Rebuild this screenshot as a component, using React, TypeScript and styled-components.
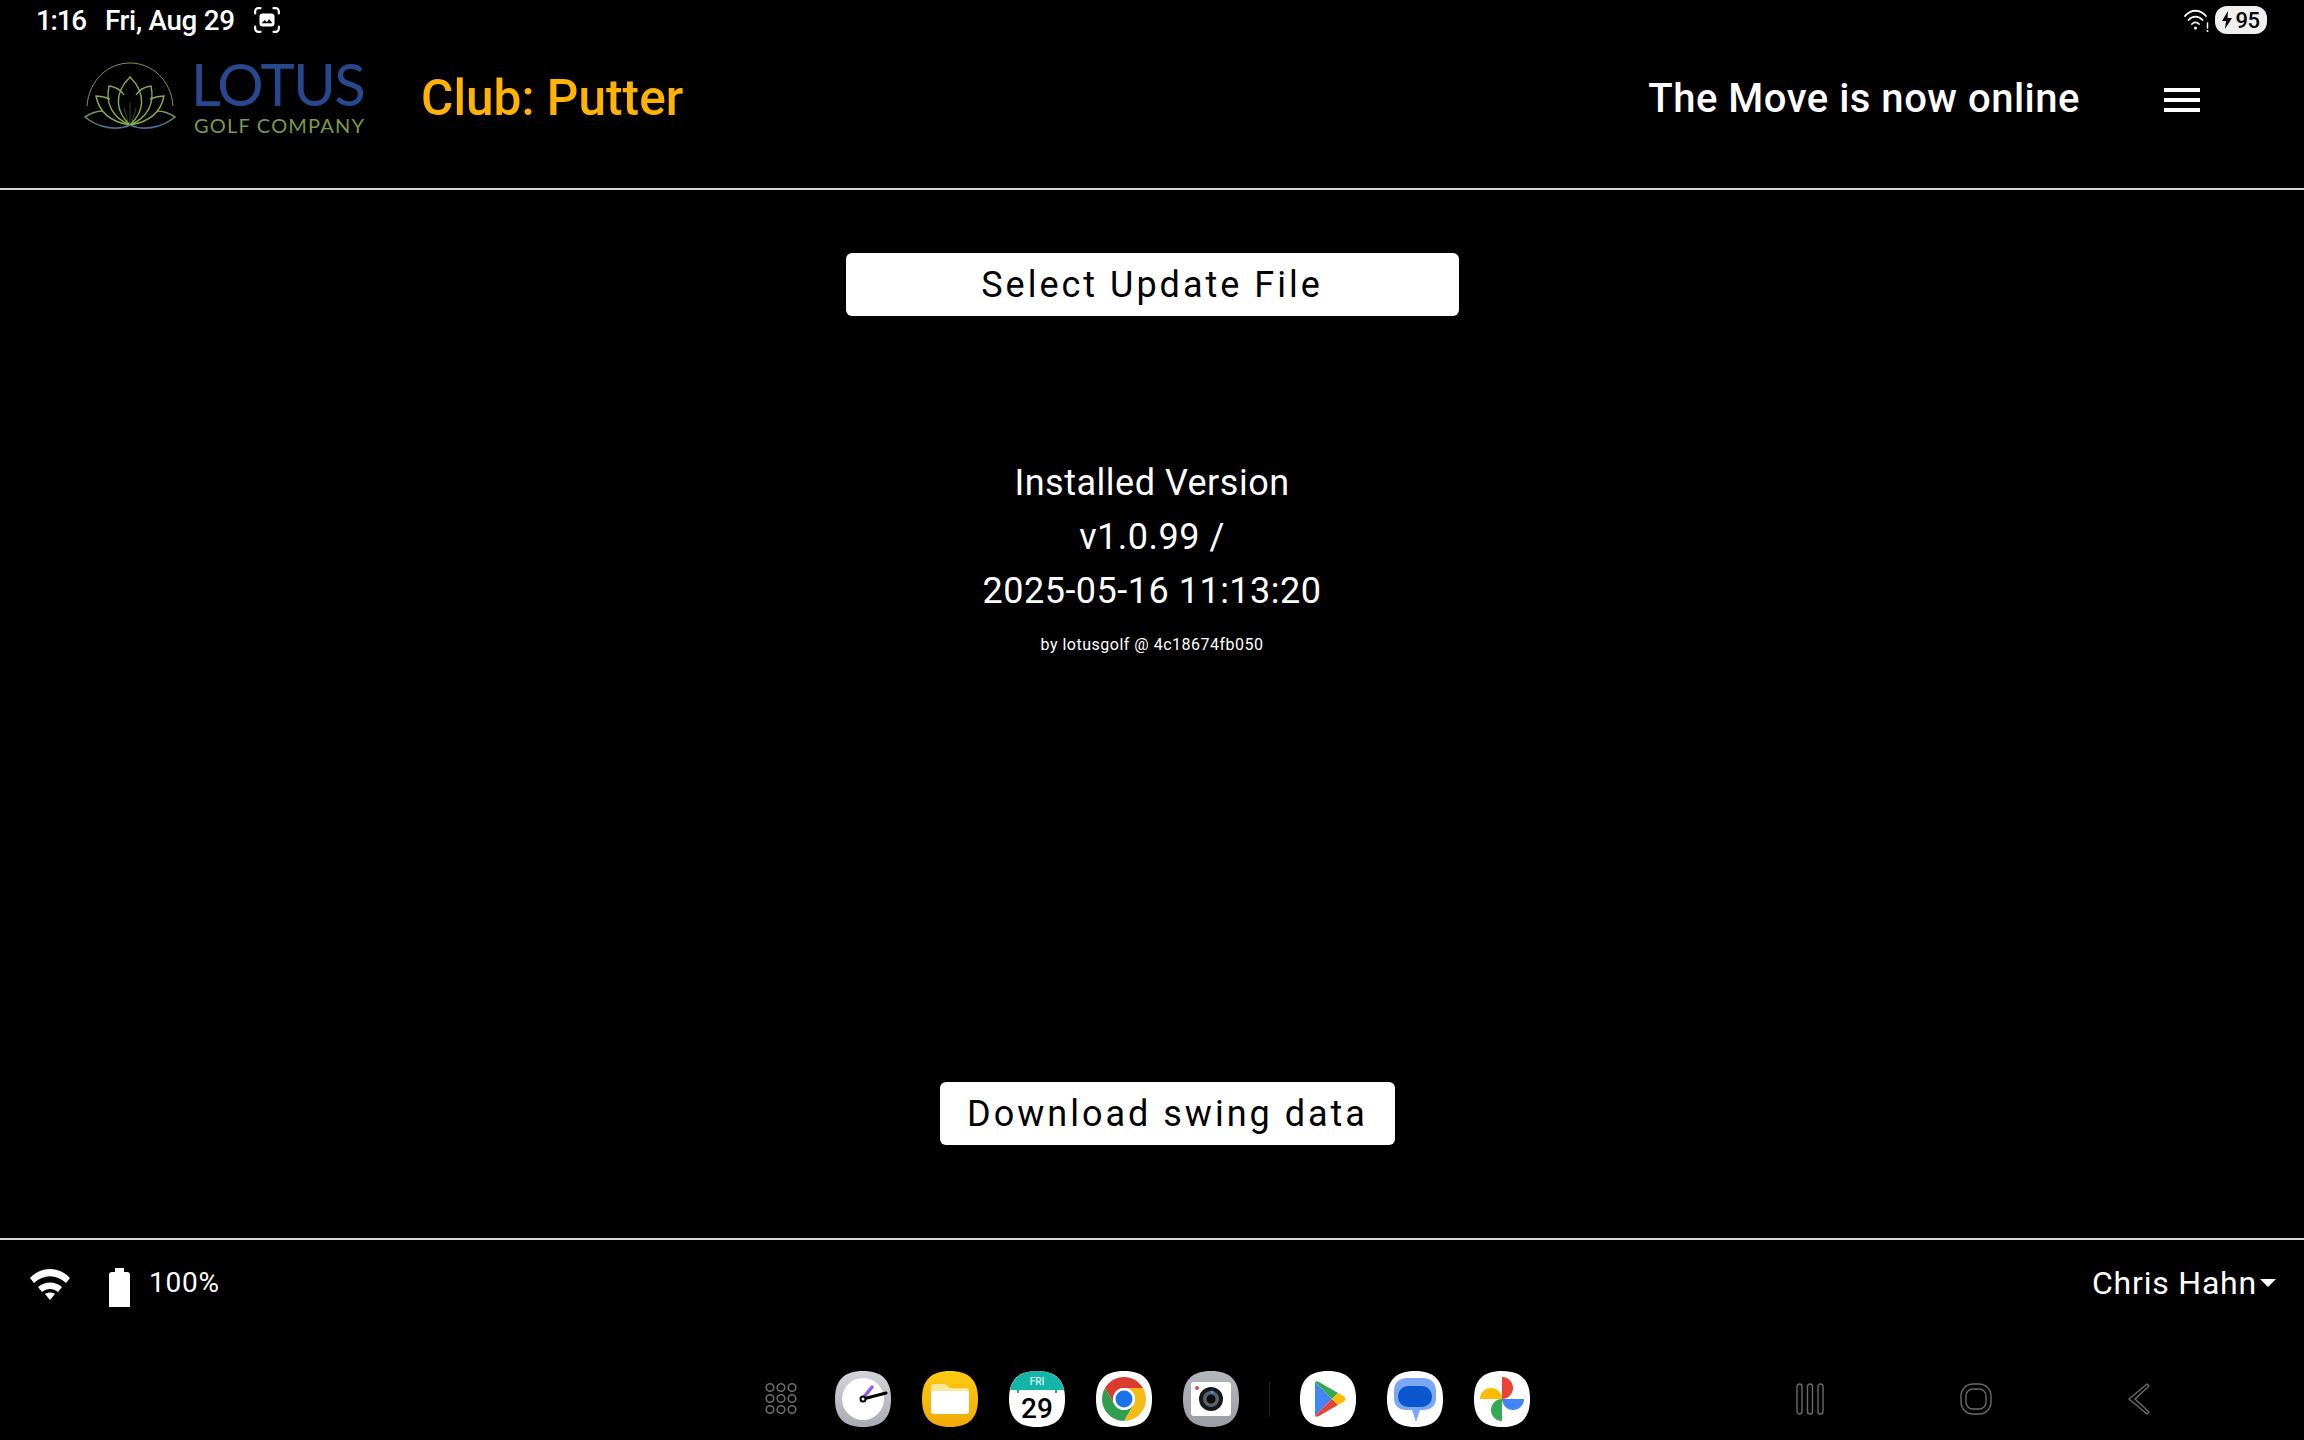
import styled, { createGlobalStyle } from "styled-components";

const GlobalStyle = createGlobalStyle`
  html, body {
    margin: 0;
    padding: 0;
    background: #000;
  }
  body {
    font-family: Roboto, "Liberation Sans", sans-serif;
    color: #fff;
  }
`;

const squircle = "M28 0C47 0 56 9 56 28S47 56 28 56 0 47 0 28 9 0 28 0Z";

function LotusMark() {
  return (
    <svg width="92" height="72" viewBox="0 0 92 72" fill="none">
      <defs>
        <linearGradient id="leaf" x1="0" y1="48" x2="0" y2="66" gradientUnits="userSpaceOnUse">
          <stop offset="0" stopColor="#8aa64c" />
          <stop offset="1" stopColor="#3f6f97" />
        </linearGradient>
      </defs>
      <path d="M3 44C5 18 24 1 46 1s41 17 43 43" stroke="#7d9a45" strokeWidth="1" />
      <g stroke="#8cab4c" strokeWidth="1.4">
        <path d="M46 63C32 50 29 32 46 15c17 17 14 35 0 48Z" />
        <path d="M46 63C29 56 21 42 25 24c7 1 12 4 15 9" />
        <path d="M46 63c17-7 25-21 21-39-7 1-12 4-15 9" />
        <path d="M46 63C27 60 15 50 12 34c5 0 9 1 14 3" />
        <path d="M46 63c19-3 31-13 34-29-5 0-9 1-14 3" />
      </g>
      <g stroke="url(#leaf)" strokeWidth="1.6">
        <path d="M46 63C33 69 14 66 1 55c6-4 12-6 18-6" />
        <path d="M46 63c13 6 32 3 45-8-6-4-12-6-18-6" />
      </g>
      <path d="M46 62V40M44 60l-4-14M48 60l4-14" stroke="#6f8a3c" strokeWidth=".5" />
    </svg>
  );
}

function ScreenshotGlyph() {
  return (
    <svg width="28" height="28" viewBox="0 0 26 26" fill="none">
      <path
        d="M7 2H5a3 3 0 0 0-3 3v2M19 2h2a3 3 0 0 1 3 3v2M7 24H5a3 3 0 0 1-3-3v-2M19 24h2a3 3 0 0 0 3-3v-2"
        stroke="#fff"
        strokeWidth="2"
        strokeLinecap="round"
      />
      <rect x="6" y="7" width="14" height="12" rx="3" fill="#fff" />
      <path d="M8 16l3-3 2 2 2-3 3 4Z" fill="#000" />
    </svg>
  );
}

function StatusWifi() {
  return (
    <svg width="25" height="26" viewBox="0 0 25 26" fill="none" stroke="#fff" strokeLinecap="round">
      <path d="M1 9c6-7 15-7 21 0" strokeWidth="1.8" />
      <path d="M4.5 13c4-4.500 10-4.500 14 0" strokeWidth="1.8" />
      <path d="M8 17c2-2.200 5-2.200 7 0" strokeWidth="1.8" />
      <circle cx="11.500" cy="21" r="1.500" fill="#fff" stroke="none" />
      <path d="M23.500 16v5" strokeWidth="1.500" />
      <circle cx="23.500" cy="24" r="1" fill="#fff" stroke="none" />
    </svg>
  );
}

function FooterWifi() {
  return (
    <svg width="40" height="32" viewBox="0 0 40 32" fill="#fff">
      <path d="M0 10C11-2 29-2 40 10l-4 5C26 6 14 6 4 15Z" />
      <path d="M8 19c7-6 17-6 24 0l-4 5c-5-4-11-4-16 0Z" />
      <path d="M15 26c3-2 7-2 10 0l-5 6Z" />
    </svg>
  );
}

function BatteryIcon() {
  return (
    <svg width="21" height="39" viewBox="0 0 21 39" fill="#fff">
      <path d="M6 0h9v4h3a3 3 0 0 1 3 3v32H0V7a3 3 0 0 1 3-3h3Z" />
    </svg>
  );
}

function AppsGrid() {
  const dots = [5, 16, 27];
  return (
    <svg width="32" height="33" viewBox="0 0 32 33" fill="none" stroke="#6d6d6d" strokeWidth="1.6">
      {dots.map((y) => dots.map((x) => <circle key={`${x}-${y}`} cx={x} cy={y + 0.5} r="3.8" />))}
    </svg>
  );
}

function ClockApp() {
  return (
    <svg width="56" height="56" viewBox="0 0 56 56">
      <defs>
        <linearGradient id="clockBg" x1="0" y1="0" x2="0" y2="1">
          <stop offset="0" stopColor="#d3d5da" />
          <stop offset="1" stopColor="#a9abb2" />
        </linearGradient>
      </defs>
      <path d={squircle} fill="url(#clockBg)" />
      <circle cx="28" cy="28" r="21" fill="#fff" />
      <path d="M29 26l8-10" stroke="#8a5cf0" strokeWidth="3.500" strokeLinecap="round" />
      <path d="M28 28l23-6" stroke="#000" strokeWidth="3" strokeLinecap="round" />
      <circle cx="28" cy="28" r="2.500" fill="#fff" stroke="#000" strokeWidth="2" />
    </svg>
  );
}

function FilesApp() {
  return (
    <svg width="56" height="56" viewBox="0 0 56 56">
      <defs>
        <linearGradient id="filesBg" x1="0" y1="0" x2="0" y2="1">
          <stop offset="0" stopColor="#fdcb12" />
          <stop offset="1" stopColor="#f0a908" />
        </linearGradient>
      </defs>
      <path d={squircle} fill="url(#filesBg)" />
      <path d="M9 16a3 3 0 0 1 3-3h11l5 4h16a3 3 0 0 1 3 3v6H9Z" fill="#ffe79a" />
      <rect x="9" y="20" width="38" height="23" rx="3" fill="#fff" />
    </svg>
  );
}

function CalendarApp() {
  return (
    <svg width="56" height="56" viewBox="0 0 56 56">
      <path d={squircle} fill="#fff" />
      <path d="M28 0C43 0 52 6 55 19H1C4 6 13 0 28 0Z" fill="#12b5a8" />
      <path d="M8 17h2v5H8zM46 17h2v5h-2z" fill="#12b5a8" />
      <text x="28" y="14" textAnchor="middle" fontFamily="Roboto" fontWeight="500" fontSize="10" fill="#d8f5f2">
        FRI
      </text>
      <text x="28" y="47" textAnchor="middle" fontFamily="Roboto" fontWeight="500" fontSize="28" fill="#000">
        29
      </text>
    </svg>
  );
}

function ChromeApp() {
  return (
    <svg width="56" height="56" viewBox="0 0 56 56">
      <path d={squircle} fill="#fff" />
      <path d="M9 17A22 22 0 0 1 47 17H28A11 11 0 0 0 18.500 33.500Z" fill="#db3a2e" />
      <path d="M47 17A22 22 0 0 1 28 50L37.500 33.500A11 11 0 0 0 28 17Z" fill="#f6bb16" />
      <path d="M28 50A22 22 0 0 1 9 17L18.500 33.500A11 11 0 0 0 37.500 33.500Z" fill="#2f9e4f" />
      <circle cx="28" cy="28" r="11" fill="#fff" />
      <circle cx="28" cy="28" r="8.500" fill="#1a73e8" />
    </svg>
  );
}

function CameraApp() {
  return (
    <svg width="56" height="56" viewBox="0 0 56 56">
      <defs>
        <linearGradient id="camBg" x1="0" y1="0" x2="0" y2="1">
          <stop offset="0" stopColor="#b4b7bd" />
          <stop offset="1" stopColor="#9a9da4" />
        </linearGradient>
      </defs>
      <path d={squircle} fill="url(#camBg)" />
      <rect x="8" y="11" width="40" height="34" rx="3" fill="#fff" />
      <circle cx="14" cy="17" r="2" fill="#e0483e" />
      <circle cx="28" cy="28" r="12" fill="#17181c" />
      <circle cx="28" cy="28" r="8" fill="#5c6068" />
      <circle cx="28" cy="28" r="4.500" fill="#0c0d10" />
      <circle cx="29" cy="21" r="1.500" fill="#36a3d9" />
    </svg>
  );
}

function PlayApp() {
  return (
    <svg width="56" height="56" viewBox="0 0 56 56">
      <path d={squircle} fill="#fff" />
      <path d="M15 11v34l17-17Z" fill="#4285f4" />
      <path d="M15 11c1-1 2-1 4 0l19 11-6 6Z" fill="#34a853" />
      <path d="M15 45c1 1 2 1 4 0l19-11-6-6Z" fill="#ea4335" />
      <path d="M38 22l6 3.500c2 1.500 2 3.500 0 5L38 34l-6-6Z" fill="#fbbc04" />
    </svg>
  );
}

function MessagesApp() {
  return (
    <svg width="56" height="56" viewBox="0 0 56 56">
      <path d={squircle} fill="#fff" />
      <path d="M20 7h16c8 0 13 5 13 13v7c0 8-5 12-13 12h-3l-4 12-4-12h-5C12 39 7 35 7 27v-7C7 12 12 7 20 7Z" fill="#7ba7f7" />
      <rect x="11" y="15" width="34" height="21" rx="10" fill="#0b57d0" />
    </svg>
  );
}

function PhotosApp() {
  return (
    <svg width="56" height="56" viewBox="0 0 56 56">
      <path d={squircle} fill="#fff" />
      <path d="M28 28V6a11 11 0 0 1 0 22Z" fill="#ea4335" />
      <path d="M28 28h22a11 11 0 0 1-22 0Z" fill="#4285f4" />
      <path d="M28 28v22a11 11 0 0 1 0-22Z" fill="#34a853" />
      <path d="M28 28H6a11 11 0 0 1 22 0Z" fill="#fbbc04" />
    </svg>
  );
}

function NavRecents() {
  return (
    <svg width="28" height="32" viewBox="0 0 28 32" fill="none" stroke="#6a6a6a" strokeWidth="1.400">
      <rect x="1" y="1" width="5" height="30" rx="2.500" />
      <rect x="11.500" y="1" width="5" height="30" rx="2.500" />
      <rect x="22" y="1" width="5" height="30" rx="2.500" />
    </svg>
  );
}

function NavHome() {
  return (
    <svg width="32" height="32" viewBox="0 0 32 32" fill="none" stroke="#6a6a6a" strokeWidth="1.400">
      <rect x="1" y="1" width="30" height="30" rx="12" />
      <rect x="6" y="6" width="20" height="20" rx="7" />
    </svg>
  );
}

function NavBack() {
  return (
    <svg width="22" height="32" viewBox="0 0 22 32" fill="none" stroke="#6a6a6a" strokeWidth="1.400" strokeLinejoin="round">
      <path d="M19 1l2 2L7 16l14 13-2 2L1 16Z" />
    </svg>
  );
}

export default function App() {
  return (
    <Screen>
      <GlobalStyle />
      <StatusBar>
        <StatusGroup>
          <StatusTime>1:16</StatusTime>
          <StatusText>Fri, Aug 29</StatusText>
          <ScreenshotGlyph />
        </StatusGroup>
        <StatusRight>
          <StatusWifi />
          <BatteryPill>
            <svg width="10" height="18" viewBox="0 0 10 18" fill="#000">
              <path d="M6 0L0 10h4l-1 8 7-11H5.500Z" />
            </svg>
            95
          </BatteryPill>
        </StatusRight>
      </StatusBar>

      <Header>
        <Brand>
          <LotusMark />
          <Wordmark>
            <LotusName>LOTUS</LotusName>
            <LotusSub>GOLF COMPANY</LotusSub>
          </Wordmark>
        </Brand>
        <ClubName>Club: Putter</ClubName>
        <Connection>The Move is now online</Connection>
        <MenuButton aria-label="menu">
          <MenuBar />
          <MenuBar />
          <MenuBar />
        </MenuButton>
      </Header>

      <Main>
        <SelectButton>Select Update File</SelectButton>
        <VersionBlock>
          <VersionLine>Installed Version</VersionLine>
          <VersionLine>v1.0.99 /</VersionLine>
          <VersionLine>2025-05-16 11:13:20</VersionLine>
          <BuildLine>by lotusgolf @ 4c18674fb050</BuildLine>
        </VersionBlock>
        <DownloadButton>Download swing data</DownloadButton>
      </Main>

      <Footer>
        <FooterStatus>
          <FooterWifi />
          <BatteryIcon />
          <BatteryText>100%</BatteryText>
        </FooterStatus>
        <UserMenu>
          Chris Hahn
          <Caret />
        </UserMenu>
      </Footer>

      <Dock>
        <AppsSlot>
          <AppsGrid />
        </AppsSlot>
        <AppRow>
          <ClockApp />
          <FilesApp />
          <CalendarApp />
          <ChromeApp />
          <CameraApp />
        </AppRow>
        <DockDivider />
        <AppRow>
          <PlayApp />
          <MessagesApp />
          <PhotosApp />
        </AppRow>
        <NavKeys>
          <NavRecents />
          <NavHome />
          <NavBack />
        </NavKeys>
      </Dock>
    </Screen>
  );
}

const Screen = styled.div`
  width: 2304px;
  height: 1440px;
  display: flex;
  flex-direction: column;
  background: #000;
  overflow: hidden;
`;

const StatusBar = styled.div`
  height: 40px;
  padding: 0 37px 0 36px;
  display: flex;
  align-items: center;
  justify-content: space-between;
  flex-shrink: 0;
`;

const StatusGroup = styled.div`
  display: flex;
  align-items: center;
  gap: 19px;
  svg {
    margin-left: -1px;
  }
`;

const StatusText = styled.span`
  font-size: 27.8px;
  font-weight: 500;
  letter-spacing: -0.3px;
`;

const StatusTime = styled(StatusText)`
  letter-spacing: -1.2px;
`;

const StatusRight = styled.div`
  display: flex;
  align-items: center;
  gap: 6px;
`;

const BatteryPill = styled.div`
  width: 52px;
  height: 28px;
  border-radius: 12px;
  background: #efefef;
  color: #000;
  font-size: 22px;
  font-weight: 500;
  letter-spacing: -0.5px;
  display: flex;
  align-items: center;
  justify-content: center;
  gap: 3px;
`;

const Header = styled.header`
  height: 116px;
  padding: 0 104px 32px 84px;
  display: flex;
  align-items: center;
  flex-shrink: 0;
  border-bottom: 2px solid #d8d8d8;
`;

const Brand = styled.div`
  display: flex;
  align-items: center;
  gap: 17px;
  width: 337px;
`;

const Wordmark = styled.div`
  display: flex;
  flex-direction: column;
  align-items: flex-start;
`;

const LotusName = styled.span`
  font-family: Lato, sans-serif;
  font-size: 58px;
  line-height: 48px;
  margin-left: -2px;
  letter-spacing: -1.5px;
  color: #27488f;
`;

const LotusSub = styled.span`
  font-family: Lato, sans-serif;
  font-size: 20px;
  font-weight: 400;
  line-height: 22px;
  margin: 6px 0 0 1px;
  letter-spacing: 1.2px;
  color: #7d9a45;
`;

const ClubName = styled.div`
  font-size: 49.6px;
  font-weight: 500;
  color: #ffb300;
`;

const Connection = styled.div`
  margin-left: auto;
  font-size: 40px;
  font-weight: 500;
  letter-spacing: 0.5px;
`;

const MenuButton = styled.div`
  margin-left: 84px;
  width: 36px;
  display: flex;
  flex-direction: column;
  gap: 6px;
  padding-top: 4px;
`;

const MenuBar = styled.span`
  height: 4px;
  background: #fff;
`;

const Main = styled.main`
  flex: 1;
  min-height: 0;
  padding: 63px 0 93px;
  display: flex;
  flex-direction: column;
  align-items: center;
  border-bottom: 2px solid #d8d8d8;
`;

const WhiteButton = styled.button`
  height: 63px;
  flex-shrink: 0;
  padding: 0;
  border: none;
  border-radius: 6px;
  background: #fff;
  color: #000;
  font-family: Roboto, sans-serif;
  font-size: 36px;
  font-weight: 450;
  letter-spacing: 3px;
`;

const SelectButton = styled(WhiteButton)`
  width: 613px;
`;

const DownloadButton = styled(WhiteButton)`
  width: 455px;
  margin-top: auto;
  margin-left: 31px;
`;

const VersionBlock = styled.div`
  margin-top: 140px;
  display: flex;
  flex-direction: column;
  align-items: center;
`;

const VersionLine = styled.div`
  font-size: 36px;
  line-height: 54px;
  letter-spacing: 0.5px;
`;

const BuildLine = styled.div`
  font-size: 16px;
  line-height: 54px;
  letter-spacing: 0.5px;
`;

const Footer = styled.footer`
  height: 120px;
  box-sizing: border-box;
  flex-shrink: 0;
  padding: 28px 28px 0 30px;
  display: flex;
  align-items: flex-start;
  justify-content: space-between;
`;

const FooterStatus = styled.div`
  display: flex;
  align-items: flex-start;
  gap: 39px;
`;

const BatteryText = styled.span`
  font-size: 28px;
  font-weight: 400;
  line-height: 32px;
  margin: -1px 0 0 -20px;
  letter-spacing: 0.8px;
`;

const UserMenu = styled.div`
  display: flex;
  align-items: center;
  gap: 3px;
  margin-top: -2px;
  font-size: 32px;
  line-height: 34px;
  letter-spacing: 0.8px;
  font-weight: 400;
`;

const Caret = styled.span`
  width: 0;
  height: 0;
  border-left: 8px solid transparent;
  border-right: 8px solid transparent;
  border-top: 8px solid #fff;
`;

const Dock = styled.div`
  height: 80px;
  flex-shrink: 0;
  padding: 0 0 3px 765px;
  box-sizing: border-box;
  display: flex;
  align-items: center;
`;

const AppsSlot = styled.div`
  display: flex;
  margin-right: 38px;
`;

const AppRow = styled.div`
  display: flex;
  align-items: center;
  gap: 31px;
`;

const DockDivider = styled.span`
  width: 1px;
  height: 36px;
  margin: 0 30px 0 30px;
  background: #1e1e1e;
`;

const NavKeys = styled.div`
  margin-left: 266px;
  display: flex;
  align-items: center;
  gap: 136px;
`;
